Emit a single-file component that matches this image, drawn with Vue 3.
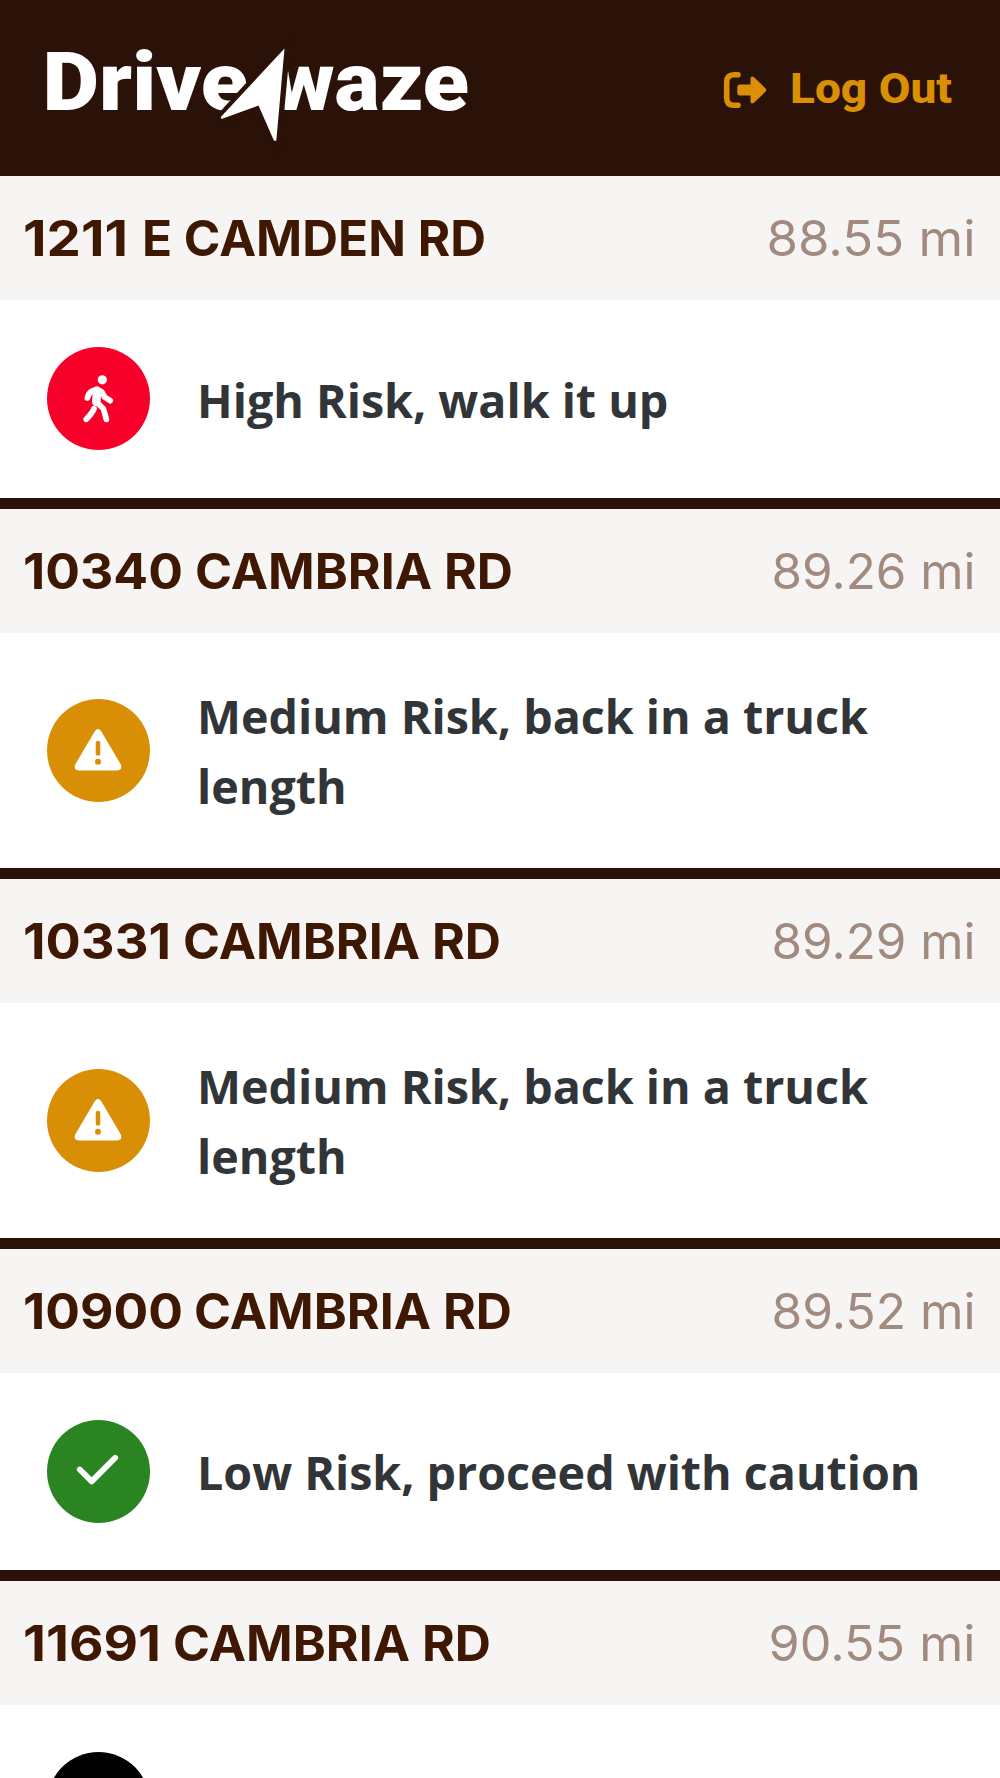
<!-- Stop list with backing risk for each address -->

<template>
  <div class="page">
    <header class="top-bar">
      <!-- Logo -->
      <svg class="logo" width="430" height="100" viewBox="40 44 430 100">
        <text x="42.5" y="110" textLength="206" lengthAdjust="spacingAndGlyphs">Drive</text>
        <text x="273" y="110" textLength="196" lengthAdjust="spacingAndGlyphs">waze</text>
        <path class="arrow-gap" d="M284.5 48.5 276 141 258.5 105.5 220.5 119.5Z" />
        <path class="arrow" d="M284.5 48.5 276.3 140.7 274 140.7 258.5 105.5 221.5 119 220.8 117Z" />
      </svg>
      <button class="log-out" @click="logOut">
        <svg width="46" height="42" viewBox="0 0 46 42">
          <path class="bracket" d="M16 5.7H12Q4.7 5.7 4.7 13V29Q4.7 36.3 12 36.3H16" />
          <path class="out" d="M17.5 15.5H28.5V10Q28.5 6 32 8.2L43.6 19.4Q45 21 43.6 22.6L32 33.8Q28.5 36 28.5 32V26.5H17.5Q15.3 26.5 15.3 24V18Q15.3 15.5 17.5 15.5Z" />
        </svg>
        <svg class="log-out-text" width="164" height="50" viewBox="0 0 164 50">
          <text x="1" y="38" textLength="162" lengthAdjust="spacingAndGlyphs">Log Out</text>
        </svg>
      </button>
    </header>

    <section class="stop" v-for="stop in stops" :key="stop.number">
      <div class="stop-head">
        <svg class="address" width="520" height="60" viewBox="0 0 520 60">
          <text x="-1" y="48" :textLength="stop.numberWidth" lengthAdjust="spacingAndGlyphs">{{ stop.number }}</text>
          <text :x="stop.streetStart" y="48" :textLength="stop.streetWidth" lengthAdjust="spacingAndGlyphs">{{ stop.street }}</text>
        </svg>
        <svg class="distance" width="220" height="60" viewBox="0 0 220 60">
          <text :x="220.5 - stop.distanceWidth" y="48" :textLength="stop.distanceWidth" lengthAdjust="spacingAndGlyphs">{{ stop.distance }}</text>
        </svg>
      </div>
      <div class="stop-body">
        <div class="badge" :class="stop.risk">
          <svg v-if="stop.risk === 'high'" width="48" height="48" viewBox="0 0 48 48">
            <circle cx="28.3" cy="4.8" r="4.6" />
            <path class="limb" d="M22 15.2Q15 15.5 13.4 23" />
            <path class="torso" d="M23 15.5 22.3 27" />
            <path class="limb" d="M24 15.3Q28.5 15.5 30.3 21.8L36.2 25.7" />
            <path class="limb" d="M23 27.5 29.2 33.5Q30 35 32.3 44.4" />
            <path class="limb" d="M20 33.7Q18.7 37.3 12.3 44.3" />
          </svg>
          <svg v-else-if="stop.risk === 'medium'" width="48" height="48" viewBox="0 0 48 48">
            <path d="M20.8 5.2Q24 .7 27.2 5.2L46.8 38.5Q48.6 44 43.5 44.5H4.5Q-.6 44 1.2 38.5Z" />
            <path class="mark" d="M24 17V27.5" />
            <circle class="dot" cx="24" cy="35.7" r="3" />
          </svg>
          <svg v-else-if="stop.risk === 'low'" width="48" height="48" viewBox="0 0 48 48">
            <path class="check" d="M5.8 22.5 17.7 34.4 41.2 10.8" />
          </svg>
        </div>
        <p class="message">{{ stop.message }}</p>
      </div>
    </section>
  </div>
</template>

<script setup>
import { ref } from 'vue';

const stops = ref([
  { number: '1211', numberWidth: 105, street: 'E CAMDEN RD', streetStart: 118, streetWidth: 344, distance: '88.55 mi', distanceWidth: 209, risk: 'high', message: 'High Risk, walk it up' },
  { number: '10340', numberWidth: 160, street: 'CAMBRIA RD', streetStart: 171, streetWidth: 318, distance: '89.26 mi', distanceWidth: 204, risk: 'medium', message: 'Medium Risk, back in a truck length' },
  { number: '10331', numberWidth: 148, street: 'CAMBRIA RD', streetStart: 159, streetWidth: 318, distance: '89.29 mi', distanceWidth: 204, risk: 'medium', message: 'Medium Risk, back in a truck length' },
  { number: '10900', numberWidth: 160, street: 'CAMBRIA RD', streetStart: 170, streetWidth: 318, distance: '89.52 mi', distanceWidth: 204, risk: 'low', message: 'Low Risk, proceed with caution' },
  { number: '11691', numberWidth: 138, street: 'CAMBRIA RD', streetStart: 149, streetWidth: 318, distance: '90.55 mi', distanceWidth: 207, risk: 'closed', message: '' },
]);

// Clear the list when the driver logs out
function logOut() {
  stops.value = [];
}
</script>

<style>
body {
  background: #fff;
}
</style>

<style scoped>
.page {
  width: 1000px;
  height: 1778px;
  overflow: hidden;
  background: #fff;
  font-family: "Open Sans", sans-serif;
}

.top-bar {
  display: flex;
  justify-content: space-between;
  box-sizing: border-box;
  height: 176.2px;
  padding: 44px 47px 0 40px;
  background: #2b1208;
}

.logo {
  overflow: visible;
}

.logo text {
  fill: #fff;
  font-family: Roboto, sans-serif;
  font-size: 81px;
  font-weight: 900;
}

.arrow {
  fill: #fff;
}

.arrow-gap {
  fill: #2b1208;
  stroke: #2b1208;
  stroke-width: 11;
}

.log-out {
  display: flex;
  align-items: center;
  gap: 21px;
  height: 92px;
  padding: 0;
  border: 0;
  background: none;
}

.bracket {
  fill: none;
  stroke: #da8f05;
  stroke-width: 5.6;
  stroke-linecap: round;
}

.out,
.log-out-text text {
  fill: #da8f05;
}

.log-out-text text {
  font-family: Roboto, sans-serif;
  font-size: 42px;
  font-weight: 800;
}

.stop {
  border-bottom: 11px solid #2b1208;
}

.stop-head {
  display: flex;
  justify-content: space-between;
  align-items: center;
  height: 124px;
  padding: 0 25px 0 24px;
  background: #f7f5f4;
}

.stop-head svg {
  overflow: visible;
}

.address text {
  fill: #3f1803;
  font-family: Inter, sans-serif;
  font-size: 49px;
  font-weight: 650;
}

.distance text {
  fill: #a08b7e;
  font-family: Inter, sans-serif;
  font-size: 49px;
  font-weight: 400;
}

.stop-body {
  display: flex;
  align-items: center;
  gap: 47px;
  padding: 47.25px 47px;
}

.badge {
  display: flex;
  flex: none;
  align-items: center;
  justify-content: center;
  width: 103px;
  height: 103px;
  border-radius: 50%;
  background: #000;
}

.badge svg {
  margin-right: 1px;
  fill: #fff;
}

.high {
  background: #f70029;
}

.medium {
  background: #d98f05;
}

.low {
  background: #298421;
}

.limb,
.torso,
.check {
  fill: none;
  stroke: #fff;
  stroke-width: 5.8;
  stroke-linecap: round;
  stroke-linejoin: round;
}

.torso {
  stroke-width: 8.5;
}

.mark {
  stroke: #d98f05;
  stroke-width: 4.6;
  stroke-linecap: round;
}

.badge .dot {
  fill: #d98f05;
}

.message {
  margin: 1px 0 -1px;
  color: #313538;
  font-size: 46.65px;
  font-weight: 700;
  letter-spacing: -0.02px;
  line-height: 70.2px;
}
</style>
